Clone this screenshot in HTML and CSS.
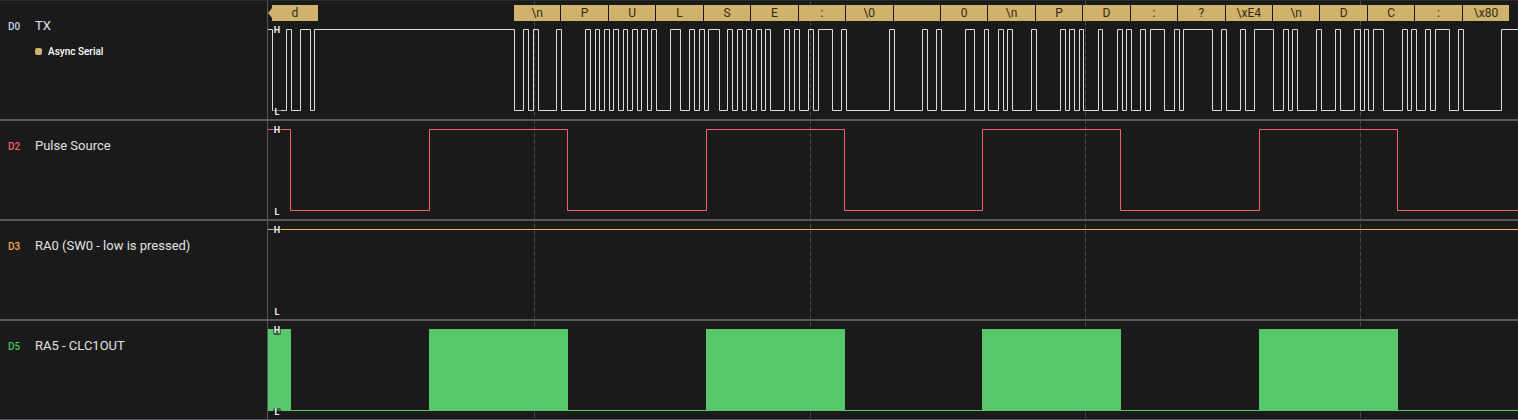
FILE: index.html
```html
<!DOCTYPE html>
<html lang="en">

<head>
 <meta charset="UTF-8">
 <title>Logic Analyzer Capture</title>
 <link rel="stylesheet" href="styles.css">
</head>

<body>

 <div class="capture">
  <div class="marker marker-1"></div>
  <div class="marker marker-2"></div>
  <div class="marker marker-3"></div>
  <div class="marker marker-4"></div>

  <div class="row row-first">
   <div class="label">
    <div class="label-top">
     <span class="channel">D0</span>
     <span class="name">TX</span>
    </div>
    <div class="analyzer"><span class="analyzer-dot"></span>Async Serial</div>
   </div>
   <div class="track">
    <div class="annotations">
     <span class="ann-cut"></span>
     <span class="ann ann-start">d</span>
     <span class="ann-gap"></span>
     <span class="ann">\n</span>
     <span class="ann">P</span>
     <span class="ann">U</span>
     <span class="ann">L</span>
     <span class="ann">S</span>
     <span class="ann">E</span>
     <span class="ann">:</span>
     <span class="ann">\0</span>
     <span class="ann"></span>
     <span class="ann">0</span>
     <span class="ann">\n</span>
     <span class="ann">P</span>
     <span class="ann">D</span>
     <span class="ann">:</span>
     <span class="ann">?</span>
     <span class="ann">\xE4</span>
     <span class="ann">\n</span>
     <span class="ann">D</span>
     <span class="ann">C</span>
     <span class="ann">:</span>
     <span class="ann">\x80</span>
    </div>
    <div class="wave">
     <svg class="wave-svg" width="1250" height="98" viewBox="268 21 1250 98">
      <path class="line line-white" d="M268 29.5H272.5V110.5H286.5V29.5H291.5V110.5H300.5V29.5H310.5V110.5H314.5V29.5H514.5V110.5H523.5V29.5H528.5V110.5H533.5V29.5H538.5V110.5H556.5V29.5H561.5V110.5H585.5V29.5H590.5V110.5H595.5V29.5H599.5V110.5H604.5V29.5H609.5V110.5H613.5V29.5H618.5V110.5H623.5V29.5H627.5V110.5H632.5V29.5H637.5V110.5H641.5V29.5H647.5V110.5H651.5V29.5H656.5V110.5H670.5V29.5H680.5V110.5H689.5V29.5H694.5V110.5H699.5V29.5H704.5V110.5H708.5V29.5H719.5V110.5H727.5V29.5H732.5V110.5H737.5V29.5H742.5V110.5H746.5V29.5H751.5V110.5H756.5V29.5H761.5V110.5H765.5V29.5H770.5V110.5H784.5V29.5H789.5V110.5H794.5V29.5H799.5V110.5H808.5V29.5H813.5V110.5H818.5V29.5H832.5V110.5H841.5V29.5H846.5V110.5H889.5V29.5H894.5V110.5H922.5V29.5H927.5V110.5H936.5V29.5H941.5V110.5H965.5V29.5H974.5V110.5H984.5V29.5H988.5V110.5H998.5V29.5H1003.5V110.5H1007.5V29.5H1012.5V110.5H1031.5V29.5H1036.5V110.5H1060.5V29.5H1065.5V110.5H1069.5V29.5H1074.5V110.5H1079.5V29.5H1083.5V110.5H1098.5V29.5H1102.5V110.5H1117.5V29.5H1122.5V110.5H1126.5V29.5H1131.5V110.5H1140.5V29.5H1145.5V110.5H1150.5V29.5H1164.5V110.5H1174.5V29.5H1179.5V110.5H1183.5V29.5H1212.5V110.5H1221.5V29.5H1226.5V110.5H1240.5V29.5H1245.5V110.5H1254.5V29.5H1273.5V110.5H1283.5V29.5H1288.5V110.5H1292.5V29.5H1297.5V110.5H1316.5V29.5H1321.5V110.5H1335.5V29.5H1340.5V110.5H1354.5V29.5H1360.5V110.5H1364.5V29.5H1368.5V110.5H1373.5V29.5H1383.5V110.5H1402.5V29.5H1407.5V110.5H1411.5V29.5H1416.5V110.5H1425.5V29.5H1430.5V110.5H1435.5V29.5H1449.5V110.5H1458.5V29.5H1463.5V110.5H1501.5V29.5H1518"/>
     </svg>
     <span class="level level-h">H</span>
     <span class="level level-l">L</span>
    </div>
   </div>
  </div>

  <div class="row">
   <div class="label">
    <div class="label-top">
     <span class="channel channel-red">D2</span>
     <span class="name">Pulse Source</span>
    </div>
   </div>
   <div class="track">
    <div class="wave">
     <svg class="wave-svg" width="1250" height="98" viewBox="268 121 1250 98">
      <path class="line line-red" d="M268 129.5H290.5V210.5H429.5V129.5H567.5V210.5H706.5V129.5H844.5V210.5H982.5V129.5H1120.5V210.5H1259.5V129.5H1397.5V210.5H1518"/>
     </svg>
     <span class="level level-h">H</span>
     <span class="level level-l">L</span>
    </div>
   </div>
  </div>

  <div class="row">
   <div class="label">
    <div class="label-top">
     <span class="channel channel-orange">D3</span>
     <span class="name">RA0 (SW0 - low is pressed)</span>
    </div>
   </div>
   <div class="track">
    <div class="wave">
     <svg class="wave-svg" width="1250" height="98" viewBox="268 221 1250 98">
      <path class="line line-orange" d="M268 229.5H1518"/>
     </svg>
     <span class="level level-h">H</span>
     <span class="level level-l">L</span>
    </div>
   </div>
  </div>

  <div class="row">
   <div class="label">
    <div class="label-top">
     <span class="channel channel-green">D5</span>
     <span class="name">RA5 - CLC1OUT</span>
    </div>
   </div>
   <div class="track">
    <div class="wave">
     <svg class="wave-svg" width="1250" height="98" viewBox="268 321 1250 98">
      <path class="line line-green" d="M268 410.5H1518"/>
      <path class="fill-green" d="M268 329H291V411H268ZM429 329H568V411H429ZM706 329H845V411H706ZM982 329H1121V411H982ZM1259 329H1398V411H1259Z"/>
     </svg>
     <span class="level level-h">H</span>
     <span class="level level-l">L</span>
    </div>
   </div>
  </div>
 </div>

</body>

</html>
```

FILE: styles.css
```css
body {
  margin: 0;
  background-color: #1a1a1a;
  color: #e2e2e2;
  font-family: Roboto, "Liberation Sans", sans-serif;
  overflow: hidden;
}

.capture {
  position: relative;
  width: 1518px;
  height: 420px;
  overflow: hidden;
}

.marker {
  position: absolute;
  top: 0;
  bottom: 0;
  width: 1px;
  background: repeating-linear-gradient(to bottom, #4a4a4e 0, #4a4a4e 4px, #2a2a2c 4px, #2a2a2c 7px);
}

.marker-1 { left: 534px; }
.marker-2 { left: 810px; }
.marker-3 { left: 1085px; }
.marker-4 { left: 1360px; }

.row {
  position: relative;
  display: flex;
  height: 98px;
  border-bottom: 2px solid #58585c;
}

.row-first {
  height: 118px;
  border-top: 1px solid #2a2a30;
}

.label {
  width: 268px;
  flex-shrink: 0;
  box-sizing: border-box;
  padding: 17px 0 0 8px;
  border-right: 1px solid #58585c;
}

.label-top {
  display: flex;
  align-items: baseline;
}

.channel {
  width: 27px;
  font-size: 10px;
  font-weight: 500;
  color: #c4d4e4;
}

.channel-red { color: #ff5a6c; }
.channel-orange { color: #f8a850; }
.channel-green { color: #45c060; }

.name {
  font-size: 13px;
  line-height: 15px;
}

.analyzer {
  display: flex;
  align-items: center;
  margin: 13px 0 0 27px;
  font-size: 10px;
  font-weight: 500;
  color: #fff;
}

.analyzer-dot {
  width: 7px;
  height: 7px;
  margin-right: 6px;
  border-radius: 2px;
  background-color: #cfb36d;
}

.track {
  flex: 1;
  min-width: 0;
}

.annotations {
  position: relative;
  display: flex;
  height: 16px;
  margin-top: 4px;
}

.ann {
  flex: 0 0 46.45px;
  margin-right: 1px;
  background-color: #cfb36d;
  color: #332a14;
  font-size: 12px;
  line-height: 16px;
  text-align: center;
}

.ann-start {
  flex-basis: 46px;
  margin-right: 0;
}

.ann-cut {
  flex: 0 0 4px;
  margin: 3px 0;
  background-color: #cfb36d;
  clip-path: polygon(100% 0, 100% 100%, 0 50%);
}

.ann-gap {
  flex: 0 0 196px;
}

.wave {
  position: relative;
  height: 98px;
}

.wave-svg {
  position: relative;
  display: block;
}

.line {
  fill: none;
  stroke-width: 1;
}

.line-white { stroke: #dcdcdc; }
.line-red { stroke: #f4606e; }
.line-orange { stroke: #f4b266; }
.line-green { stroke: #57c76b; }

.fill-green { fill: #57c76b; }

.level {
  position: absolute;
  left: 5px;
  width: 8px;
  height: 9px;
  font-size: 9px;
  font-weight: 700;
  line-height: 9px;
  text-align: center;
  color: #eee;
  background-color: rgba(26, 26, 26, 0.55);
  border-radius: 2px;
}

.level-h { top: 5px; }
.level-l { top: 87px; }
```
